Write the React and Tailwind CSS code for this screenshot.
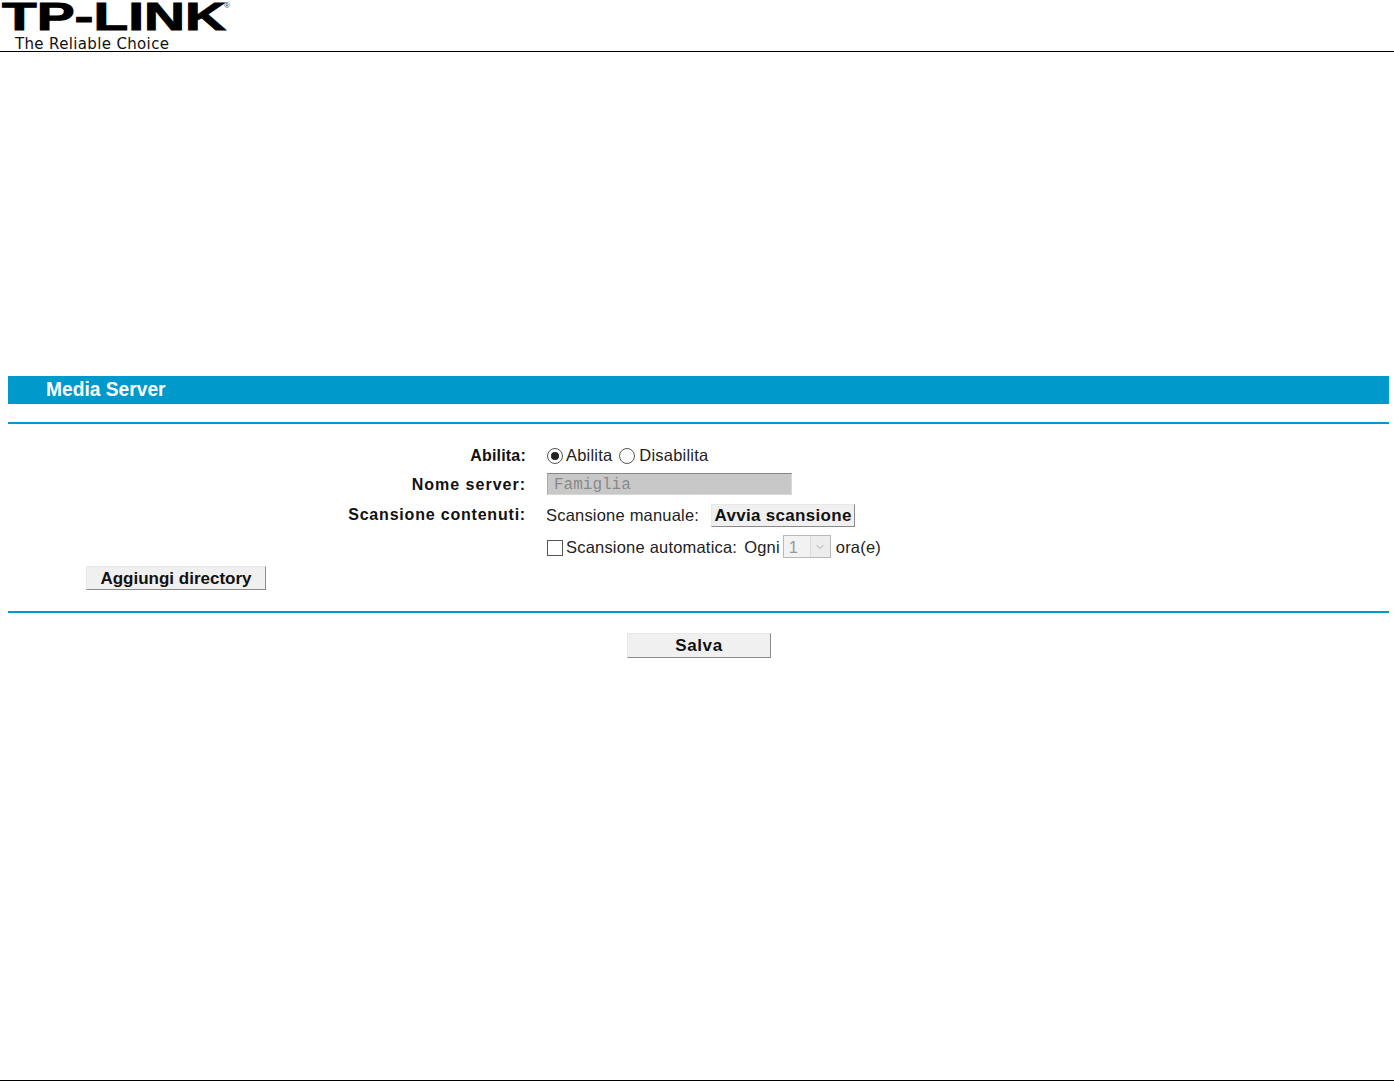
import React from "react";
import { ChevronDown } from "lucide-react";

const font = "font-['Liberation_Sans',Arial,sans-serif]";

const Logo = () => (
    <svg width="236" height="32" viewBox="0 0 236 32" className="block overflow-visible">
        <text x="2" y="29.8" textLength="224" lengthAdjust="spacingAndGlyphs" fontFamily="'Liberation Sans', Arial, sans-serif" fontWeight="700" fontSize="39" fill="#000" stroke="#000" strokeWidth="1">
            TP-LINK
        </text>
        <text x="224" y="8" fontFamily="'Liberation Sans', Arial, sans-serif" fontSize="8" fill="#333">®</text>
    </svg>
);

const Button = ({ className, children }) => (
    <button className={`border border-t-[#e8e8e8] border-l-[#e8e8e8] border-r-[#8a8a8a] border-b-[#8a8a8a] bg-[#f0f0f0] text-[17px] font-bold leading-none text-[#111] ${className}`}>
        {children}
    </button>
);

const Radio = ({ checked }) => (
    <span className="flex h-4 w-4 items-center justify-center rounded-full border border-[#555] bg-white">
        {checked && <span className="h-2 w-2 rounded-full bg-[#222]"></span>}
    </span>
);

const Label = ({ className, children }) => (
    <div className={`text-right text-[16px] font-bold text-[#111] ${className}`}>{children}</div>
);

export default function App() {
    return (
        <div className={`flex h-[1081px] flex-col overflow-hidden bg-white ${font}`}>
            <header className="h-[52px] border-b border-black">
                <Logo />
                <div className="mt-[3px] pl-[15px] font-['DejaVu_Sans',sans-serif] text-[15px] leading-[18px] tracking-[0.35px] text-[#111]">The Reliable Choice</div>
            </header>

            <main className="flex-1 pl-2 pr-[5px] pt-[324px]">
                <div className="flex h-[28px] items-center bg-[#0099cc] pb-[2px] pl-[38px] text-[20px] font-bold text-white">
                    <span className="origin-left scale-x-[0.96]">Media Server</span>
                </div>
                <div className="mt-[18px] h-[2px] bg-[#0099cc]"></div>

                <div className="mt-[20px] grid grid-cols-[518px_1fr] gap-x-5">
                    <Label className="h-[29px] pt-[1px] leading-[22px] tracking-[0.2px]">Abilita:</Label>
                    <div className="flex h-[29px] items-start text-[16.5px] leading-[22px] tracking-[0.2px] text-[#222]">
                        <span className="ml-[1px] mt-[4px]"><Radio checked /></span>
                        <span className="ml-[3px]">Abilita</span>
                        <span className="ml-[7px] mt-[4px]"><Radio /></span>
                        <span className="ml-[4px]">Disabilita</span>
                    </div>

                    <Label className="h-[31px] pt-[1px] leading-[22px] tracking-[1px]">Nome server:</Label>
                    <div className="h-[31px]">
                        <input
                            disabled
                            value="Famiglia"
                            readOnly
                            className="ml-[1px] block h-[22px] w-[245px] border border-t-[#888] border-l-[#aaa] border-r-[#d8d8d8] border-b-[#d8d8d8] bg-[#c8c8c8] pl-[6px] pt-[2px] font-['Liberation_Mono',monospace] text-[16px] leading-none text-[#888]"
                        />
                    </div>

                    <Label className="h-[31px] leading-[22px] tracking-[0.8px]">Scansione contenuti:</Label>
                    <div className="flex h-[31px] items-start text-[16.5px] leading-[22px] tracking-[0.2px] text-[#222]">
                        <span>Scansione manuale:</span>
                        <Button className="ml-3 h-[23px] w-[144px] tracking-[0.3px]">Avvia scansione</Button>
                    </div>

                    <div></div>
                    <div className="flex h-[31px] items-start text-[16.5px] leading-[24px] tracking-[0.2px] text-[#222]">
                        <span className="ml-[1px] mt-[5px] h-4 w-4 border border-[#555] bg-white"></span>
                        <span className="ml-[3px]">Scansione automatica:</span>
                        <span className="ml-[7px]">Ogni</span>
                        <div className="relative ml-[3px] h-[23px] w-[48px] border border-[#b8b8b8] bg-[#f2f2f2] pl-[5px] leading-[22px] text-[#999]">
                            1
                            <span className="absolute inset-y-0 right-0 flex w-[20px] items-center justify-center border-l border-[#dcdcdc] bg-[#ececec]">
                                <ChevronDown className="h-3 w-3 text-[#aaa]" />
                            </span>
                        </div>
                        <span className="ml-[5px]">ora(e)</span>
                    </div>
                </div>

                <Button className="ml-[78px] block h-[24px] w-[180px]">Aggiungi directory</Button>

                <div className="mt-[21px] h-[2px] bg-[#0099cc]"></div>

                <div className="mt-[20px]">
                    <Button className="ml-[619px] block h-[25px] w-[144px] tracking-[0.6px]">Salva</Button>
                </div>
            </main>

            <footer className="h-px bg-black"></footer>
        </div>
    );
}
